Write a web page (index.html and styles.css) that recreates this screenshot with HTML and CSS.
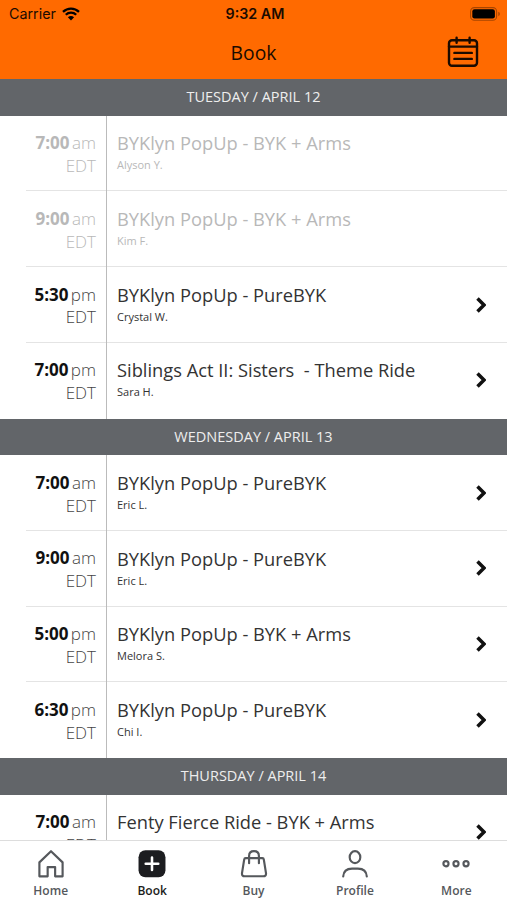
FILE: index.html
```html
<!DOCTYPE html>
<html lang="en">
<head>
    <meta charset="UTF-8">
    <meta name="viewport" content="width=device-width, initial-scale=1.0">
    <title>Book</title>
    <link rel="stylesheet" href="styles.css">
</head>
<body>
    <div class="app">
        <header class="header">
            <div class="status">
                <div class="status__carrier">
                    Carrier
                    <svg class="wifi" width="18" height="14" viewBox="0 0 18 14">
                        <path d="M1 4.8a11.6 11.6 0 0 1 16 0M3.8 7.8a7.4 7.4 0 0 1 10.4 0" fill="none" stroke="#000" stroke-width="2.3"/>
                        <path d="M9 13.5 5.9 10.3a4.6 4.6 0 0 1 6.2 0z"/>
                    </svg>
                </div>
                <div class="status__time">9:32 AM</div>
                <svg class="battery" width="31" height="14" viewBox="0 0 31 14">
                    <rect x=".6" y=".6" width="26" height="12.6" rx="3.8" fill="none" stroke="#a84500" stroke-width="1.1"/>
                    <rect x="2.3" y="2.3" width="22.6" height="9.2" rx="2.2"/>
                    <path d="M28.3 4.8v4.4q1.6-.6 1.6-2.2t-1.6-2.2z" fill="#a84500"/>
                </svg>
            </div>
            <div class="title">
                <h1>Book</h1>
                <svg class="calendar" width="32" height="32" viewBox="0 0 32 32" fill="none" stroke="#1b0b00" stroke-width="2.4" stroke-linecap="round">
                    <rect x="2" y="4.2" width="28" height="25.6" rx="3"/>
                    <path d="M2 10.6h28M9.6 1.8v5M22.6 1.8v5M7.4 16.9h17.4M7.4 22.9h17.4"/>
                </svg>
            </div>
        </header>

        <main class="schedule">
            <section>
                <h2 class="day">TUESDAY / APRIL 12</h2>
                <ul>
                    <li class="class class--past">
                        <div class="class__time"><b>7:00</b> <span>am</span><br>EDT</div>
                        <div class="class__info"><h3>BYKlyn PopUp - BYK + Arms</h3><p>Alyson Y.</p></div>
                    </li>
                    <li class="class class--past">
                        <div class="class__time"><b>9:00</b> <span>am</span><br>EDT</div>
                        <div class="class__info"><h3>BYKlyn PopUp - BYK + Arms</h3><p>Kim F.</p></div>
                    </li>
                    <li class="class">
                        <div class="class__time"><b>5:30</b> <span>pm</span><br>EDT</div>
                        <div class="class__info"><h3>BYKlyn PopUp - PureBYK</h3><p>Crystal W.</p></div>
                        <svg class="chevron" viewBox="0 0 10 16"><path d="M1.5 1.5 8 8l-6.5 6.5"/></svg>
                    </li>
                    <li class="class">
                        <div class="class__time"><b>7:00</b> <span>pm</span><br>EDT</div>
                        <div class="class__info"><h3>Siblings Act II: Sisters  - Theme Ride</h3><p>Sara H.</p></div>
                        <svg class="chevron" viewBox="0 0 10 16"><path d="M1.5 1.5 8 8l-6.5 6.5"/></svg>
                    </li>
                </ul>
            </section>
            <section>
                <h2 class="day">WEDNESDAY / APRIL 13</h2>
                <ul>
                    <li class="class">
                        <div class="class__time"><b>7:00</b> <span>am</span><br>EDT</div>
                        <div class="class__info"><h3>BYKlyn PopUp - PureBYK</h3><p>Eric L.</p></div>
                        <svg class="chevron" viewBox="0 0 10 16"><path d="M1.5 1.5 8 8l-6.5 6.5"/></svg>
                    </li>
                    <li class="class">
                        <div class="class__time"><b>9:00</b> <span>am</span><br>EDT</div>
                        <div class="class__info"><h3>BYKlyn PopUp - PureBYK</h3><p>Eric L.</p></div>
                        <svg class="chevron" viewBox="0 0 10 16"><path d="M1.5 1.5 8 8l-6.5 6.5"/></svg>
                    </li>
                    <li class="class">
                        <div class="class__time"><b>5:00</b> <span>pm</span><br>EDT</div>
                        <div class="class__info"><h3>BYKlyn PopUp - BYK + Arms</h3><p>Melora S.</p></div>
                        <svg class="chevron" viewBox="0 0 10 16"><path d="M1.5 1.5 8 8l-6.5 6.5"/></svg>
                    </li>
                    <li class="class">
                        <div class="class__time"><b>6:30</b> <span>pm</span><br>EDT</div>
                        <div class="class__info"><h3>BYKlyn PopUp - PureBYK</h3><p>Chi I.</p></div>
                        <svg class="chevron" viewBox="0 0 10 16"><path d="M1.5 1.5 8 8l-6.5 6.5"/></svg>
                    </li>
                </ul>
            </section>
            <section>
                <h2 class="day">THURSDAY / APRIL 14</h2>
                <ul>
                    <li class="class">
                        <div class="class__time"><b>7:00</b> <span>am</span><br>EDT</div>
                        <div class="class__info"><h3>Fenty Fierce Ride - BYK + Arms</h3></div>
                        <svg class="chevron" viewBox="0 0 10 16"><path d="M1.5 1.5 8 8l-6.5 6.5"/></svg>
                    </li>
                </ul>
            </section>
        </main>

        <nav class="tabs">
            <a class="tab">
                <svg viewBox="0 0 30 30"><path d="M3.2 27.8V13.6L15 2.2l11.8 11.4v14.2h-7.6v-9.4h-7.6v9.4z"/></svg>
                Home
            </a>
            <a class="tab tab--active">
                <svg viewBox="0 0 30 30"><rect class="fill" x="1.3" y="1.3" width="27.4" height="27.4" rx="7"/><path class="plus" d="M15 8.6v12.8M8.6 15h12.8"/></svg>
                Book
            </a>
            <a class="tab">
                <svg viewBox="0 0 30 30"><path d="M6.5 9.3h17q1.3 0 1.5 1.5l2.2 13.7q.3 3.2-2.7 3.2h-19q-3 0-2.7-3.2L5 10.8q.2-1.5 1.5-1.5zM10 14.5V7q0-4.8 5-4.8T20 7v7.5"/></svg>
                Buy
            </a>
            <a class="tab">
                <svg viewBox="0 0 30 30"><ellipse cx="15" cy="8.3" rx="5.4" ry="6.1"/><path d="M3 28q.5-8 9-8h6q8.5 0 9 8"/></svg>
                Profile
            </a>
            <a class="tab">
                <svg viewBox="0 0 30 30"><circle cx="4.8" cy="15" r="2.6"/><circle cx="15" cy="15" r="2.6"/><circle cx="25.2" cy="15" r="2.6"/></svg>
                More
            </a>
        </nav>
    </div>
</body>
</html>
```
FILE: styles.css
```css
* {
    margin: 0;
    padding: 0;
    box-sizing: border-box;
}
body {
    font-family: "Open Sans", "Noto Sans", sans-serif;
    background: #fff;
    color: #222;
}
ul {
    list-style: none;
}
.app {
    width: 100%;
    height: 900px;
    display: flex;
    flex-direction: column;
    overflow: hidden;
}

/* header */
.header {
    height: 79px;
    flex: none;
    background: #ff6a00;
    color: #1b0b00;
}
.status {
    height: 27px;
    padding: 0 6px 0 9px;
    display: grid;
    grid-template-columns: 1fr auto 1fr;
    align-items: center;
    font-family: Inter, sans-serif;
    font-size: 14.3px;
}
.status__carrier {
    display: flex;
    align-items: center;
    gap: 6px;
}
.status__time {
    font-weight: 600;
}
.battery {
    justify-self: end;
}
.title {
    height: 50px;
    padding: 0 28px;
    display: grid;
    grid-template-columns: 1fr auto 1fr;
    align-items: center;
}
.title h1 {
    grid-column: 2;
    font-size: 19.3px;
    font-weight: 400;
}
.calendar {
    justify-self: end;
}

/* schedule */
.schedule {
    flex: 1;
    min-height: 0;
    overflow: hidden;
}
.day {
    height: 36.8px;
    line-height: 36.4px;
    background: #626569;
    color: #eee;
    font-size: 14.5px;
    font-weight: 400;
    text-align: center;
}
.class {
    height: 75.7px;
    display: flex;
    background: linear-gradient(#e4e4e4, #e4e4e4) 26px 100% / 100% 1px no-repeat;
}
.class:last-child {
    background: none;
}
.class__time {
    width: 107px;
    padding: 16.4px 10px 0 0;
    border-right: 1px solid #bbb;
    text-align: right;
    font-size: 17px;
    font-weight: 300;
    line-height: 22.8px;
    word-spacing: -2px;
    color: #444;
}
.class__time b {
    font-weight: 700;
    color: #111;
}
.class__info {
    flex: 1;
    padding: 14.6px 0 0 10px;
}
.class__info h3 {
    font-size: 18.3px;
    font-weight: 400;
    line-height: 25px;
    white-space: pre;
    color: #333;
}
.class__info p {
    font-size: 11px;
    line-height: 20px;
    color: #333;
}
.class--past .class__time,
.class--past .class__time b,
.class--past h3,
.class--past p {
    color: #b8b8b8;
}
.chevron {
    width: 10px;
    height: 16px;
    margin: 29.4px 21px 0 0;
    fill: none;
    stroke: #111;
    stroke-width: 3.5;
}

/* bottom tabs */
.tabs {
    height: 60px;
    flex: none;
    display: flex;
    border-top: 1px solid #ddd;
    background: #fff;
}
.tab {
    flex: 1;
    padding-top: 7.5px;
    display: flex;
    flex-direction: column;
    align-items: center;
    gap: 4px;
    font-size: 12px;
    font-weight: 600;
    line-height: 18px;
    color: #55585c;
}
.tab svg {
    width: 30px;
    height: 30px;
    fill: none;
    stroke: #55585c;
    stroke-width: 2.2;
    stroke-linecap: round;
    stroke-linejoin: round;
}
.tab--active {
    color: #1c1d20;
}
.tab .fill {
    fill: #1c1d20;
    stroke: none;
}
.tab .plus {
    stroke: #fff;
    stroke-width: 2.6;
}
```
